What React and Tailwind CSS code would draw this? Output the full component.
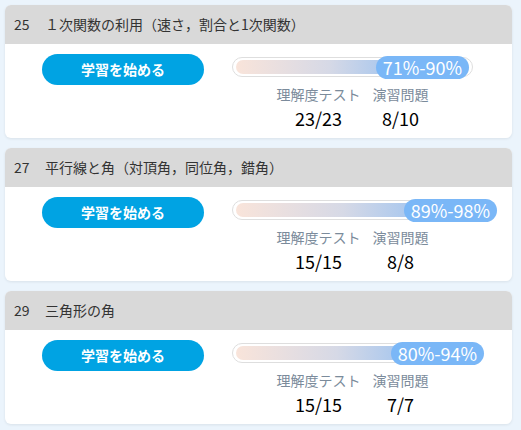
import React from "react";

const units = [
    { no: 25, title: "１次関数の利用（速さ，割合と1次関数）", range: "71%-90%", pos: 143, test: "23/23", drill: "8/10" },
    { no: 27, title: "平行線と角（対頂角，同位角，錯角）", range: "89%-98%", pos: 171, test: "15/15", drill: "8/8" },
    { no: 29, title: "三角形の角", range: "80%-94%", pos: 158, test: "15/15", drill: "7/7" },
];

const UnitCard = ({ unit }) => {
    return (
        <div className="rounded-[6px] overflow-hidden bg-white shadow-[0_1px_3px_rgba(0,0,0,0.08)]">
            {/* Header */}
            <div className="h-[39px] bg-[#d9d9d9] flex items-center px-[9px] text-[14px] text-[#333]">
                <span className="w-[31px]">{unit.no}</span>
                <span>{unit.title}</span>
            </div>

            {/* Body */}
            <div className="h-[94px] flex pt-[10px]">
                <button className="ml-[37px] w-[162px] h-[31px] rounded-full bg-[#00a3e3] text-white text-[14px] font-bold">
                    学習を始める
                </button>

                <div className="ml-[28px] w-[241px] flex flex-col">
                    {/* Bar */}
                    <div className="relative mt-[3px] h-[20px] rounded-full border border-[#dedede] bg-white">
                        <div
                            className="absolute left-[3px] top-[2px] bottom-[2px] rounded-full bg-gradient-to-r from-[#f9e4da] via-[#d6d9e6] to-[#8fbdf1]"
                            style={{ width: unit.pos + 43 }}
                        />
                        <div
                            className="absolute top-[-2px] h-[23px] w-[93px] rounded-full bg-[#7ab7f7] text-white text-[18px] leading-[23px] text-center"
                            style={{ left: unit.pos }}
                        >
                            {unit.range}
                        </div>
                    </div>

                    {/* Stats */}
                    <div className="mt-[7px] flex justify-center gap-[12px]">
                        <div className="flex flex-col items-center">
                            <span className="text-[14px] leading-[20px] text-[#7b8b9b]">理解度テスト</span>
                            <span className="mt-[2px] text-[18px] leading-[24px] text-black">{unit.test}</span>
                        </div>
                        <div className="flex flex-col items-center">
                            <span className="text-[14px] leading-[20px] text-[#7b8b9b]">演習問題</span>
                            <span className="mt-[2px] text-[18px] leading-[24px] text-black">{unit.drill}</span>
                        </div>
                    </div>
                </div>
            </div>
        </div>
    );
};

const App = () => {
    return (
        <div
            className="w-[521px] h-[430px] bg-[#ebf4fc] pt-[5px] pl-[5px] pr-[9px] flex flex-col gap-[10px]"
            style={{ fontFamily: '"Noto Sans CJK JP", "Noto Sans", sans-serif' }}
        >
            {units.map((u) => (
                <UnitCard key={u.no} unit={u} />
            ))}
        </div>
    );
};

export default App;
